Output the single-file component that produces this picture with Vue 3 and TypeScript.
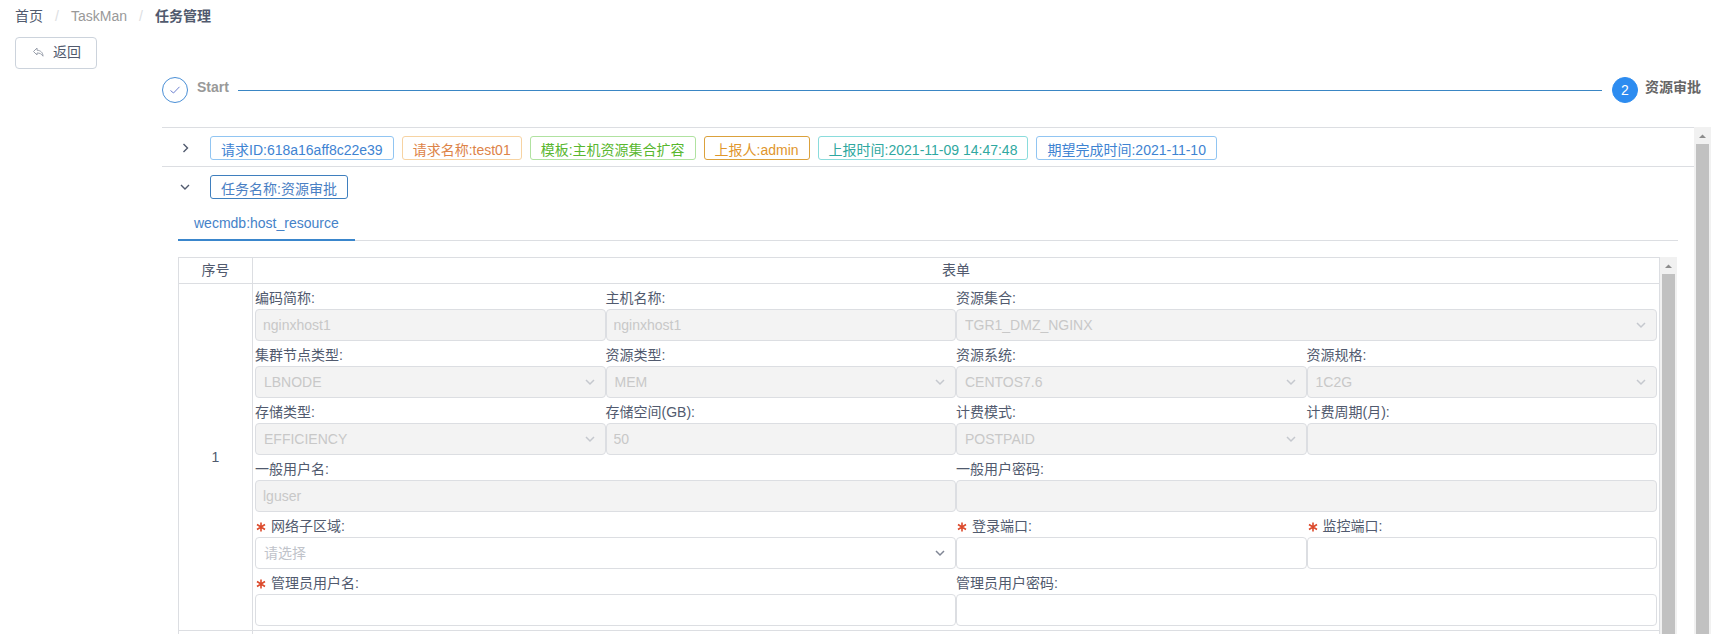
<script setup lang="ts">
import { reactive } from 'vue'

interface Field {
  id: string
  label: string
  value: string
  span: number
  kind: 'text' | 'select'
  disabled?: boolean
  required?: boolean
}

interface Tag {
  text: string
  tone: string
}

const tags: Tag[] = [
  { text: '请求ID:618a16aff8c22e39', tone: 'blue' },
  { text: '请求名称:test01', tone: 'orange' },
  { text: '模板:主机资源集合扩容', tone: 'green' },
  { text: '上报人:admin', tone: 'gold' },
  { text: '上报时间:2021-11-09 14:47:48', tone: 'cyan' },
  { text: '期望完成时间:2021-11-10', tone: 'blue' },
]

const fields = reactive<Field[]>([
  { id: 'code', label: '编码简称:', value: 'nginxhost1', span: 1, kind: 'text', disabled: true },
  { id: 'host', label: '主机名称:', value: 'nginxhost1', span: 1, kind: 'text', disabled: true },
  { id: 'set', label: '资源集合:', value: 'TGR1_DMZ_NGINX', span: 2, kind: 'select', disabled: true },
  { id: 'node', label: '集群节点类型:', value: 'LBNODE', span: 1, kind: 'select', disabled: true },
  { id: 'type', label: '资源类型:', value: 'MEM', span: 1, kind: 'select', disabled: true },
  { id: 'system', label: '资源系统:', value: 'CENTOS7.6', span: 1, kind: 'select', disabled: true },
  { id: 'spec', label: '资源规格:', value: '1C2G', span: 1, kind: 'select', disabled: true },
  { id: 'storage', label: '存储类型:', value: 'EFFICIENCY', span: 1, kind: 'select', disabled: true },
  { id: 'space', label: '存储空间(GB):', value: '50', span: 1, kind: 'text', disabled: true },
  { id: 'billing', label: '计费模式:', value: 'POSTPAID', span: 1, kind: 'select', disabled: true },
  { id: 'cycle', label: '计费周期(月):', value: '', span: 1, kind: 'text', disabled: true },
  { id: 'user', label: '一般用户名:', value: 'lguser', span: 2, kind: 'text', disabled: true },
  { id: 'password', label: '一般用户密码:', value: '', span: 2, kind: 'text', disabled: true },
  { id: 'subzone', label: '网络子区域:', value: '', span: 2, kind: 'select', required: true },
  { id: 'login', label: '登录端口:', value: '', span: 1, kind: 'text', required: true },
  { id: 'monitor', label: '监控端口:', value: '', span: 1, kind: 'text', required: true },
  { id: 'admin', label: '管理员用户名:', value: '', span: 2, kind: 'text', required: true },
  { id: 'adminpw', label: '管理员用户密码:', value: '', span: 2, kind: 'text' },
])
</script>

<template>
  <div class="page">
    <nav class="crumbs" aria-label="breadcrumb">
      <a href="#" class="crumb home">首页</a>
      <span class="slash">/</span>
      <a href="#" class="crumb">TaskMan</a>
      <span class="slash">/</span>
      <span class="crumb current">任务管理</span>
    </nav>

    <button type="button" class="back">
      <svg class="back-icon" viewBox="0 0 14 14" aria-hidden="true">
        <path d="M6 3 2.500 6.500 6 10V8C8.800 8 10.500 8.800 12 11.200 12 7.500 9.500 5.400 6 5.200Z" />
      </svg>
      <span>返回</span>
    </button>

    <main class="main">
      <ol class="steps">
        <li class="step done">
          <span class="dot">
            <svg viewBox="0 0 12 12" aria-hidden="true"><path d="M1.500 6.500 4.500 9 10.500 2.800" /></svg>
          </span>
          <span class="step-title">Start</span>
          <span class="step-line"></span>
        </li>
        <li class="step active">
          <span class="dot">2</span>
          <span class="step-title">资源审批</span>
        </li>
      </ol>

      <section class="panel">
        <div class="panel-body">
          <div class="head bordered">
            <button type="button" class="toggle" aria-label="展开">
              <svg viewBox="0 0 14 14" aria-hidden="true"><path d="M5.500 3 9.500 7 5.500 11" /></svg>
            </button>
            <span v-for="tag in tags" :key="tag.text" class="tag" :class="tag.tone">{{ tag.text }}</span>
          </div>

          <div class="head">
            <button type="button" class="toggle" aria-label="收起">
              <svg viewBox="0 0 14 14" aria-hidden="true"><path d="M3 5 7 9 11 5" /></svg>
            </button>
            <span class="tag primary">任务名称:资源审批</span>
          </div>

          <div class="content">
            <div class="tabs" role="tablist">
              <button type="button" role="tab" class="tab" aria-selected="true">wecmdb:host_resource</button>
            </div>

            <div class="scroller">
              <table class="grid">
                <thead>
                  <tr>
                    <th class="index">序号</th>
                    <th>表单</th>
                  </tr>
                </thead>
                <tbody>
                  <tr>
                    <td class="index">1</td>
                    <td class="form-cell">
                      <form class="form">
                        <div v-for="f in fields" :key="f.id" class="field" :class="{ wide: f.span === 2 }">
                          <label :for="f.id">
                            <svg v-if="f.required" class="star" viewBox="0 0 10 10" aria-hidden="true">
                              <path d="M5 .5V9.500M1 2.500 9 7.500M9 2.500 1 7.500" />
                            </svg>{{ f.label }}
                          </label>
                          <div v-if="f.kind === 'select'" class="select">
                            <select :id="f.id" v-model="f.value" :disabled="f.disabled" :class="{ empty: !f.value }">
                              <option v-if="f.value" :value="f.value">{{ f.value }}</option>
                              <option v-else value="">请选择</option>
                            </select>
                            <svg class="arrow" :class="{ off: f.disabled }" viewBox="0 0 14 14" aria-hidden="true">
                              <path d="M3 5 7 9 11 5" />
                            </svg>
                          </div>
                          <input v-else :id="f.id" v-model="f.value" type="text" :disabled="f.disabled" />
                        </div>
                      </form>
                    </td>
                  </tr>
                  <tr class="next">
                    <td class="index"></td>
                    <td></td>
                  </tr>
                </tbody>
              </table>
              <div class="bar" aria-hidden="true">
                <svg viewBox="0 0 17 17"><path d="M5 11 8.500 7.500 12 11Z" /></svg>
                <div class="thumb"></div>
              </div>
            </div>
          </div>
        </div>
        <div class="bar" aria-hidden="true">
          <svg viewBox="0 0 17 17"><path d="M5 11 8.500 7.500 12 11Z" /></svg>
          <div class="thumb"></div>
        </div>
      </section>
    </main>
  </div>
</template>

<style>
body {
  margin: 0;
  background: #fff;
}
</style>

<style scoped>
.page,
.page * {
  box-sizing: border-box;
}

.page {
  display: flex;
  flex-direction: column;
  align-items: flex-start;
  height: 100vh;
  padding: 5px 15px 0;
  overflow: hidden;
  color: #515a6e;
  font: 14px/22px "Liberation Sans", "Noto Sans CJK SC", sans-serif;
}

button,
input,
select {
  font: inherit;
  color: inherit;
  margin: 0;
}

svg {
  fill: none;
  stroke: currentColor;
}

.crumbs {
  display: flex;
  flex: none;
  margin-bottom: 10px;
}

.crumb {
  color: #999;
  text-decoration: none;
}

.crumb.home {
  color: #515a6e;
}

.crumb.current {
  color: #515a6e;
  font-weight: 700;
}

.slash {
  width: 28px;
  text-align: center;
  color: #dcdee2;
}

.back {
  display: flex;
  flex: none;
  align-items: center;
  gap: 8px;
  height: 32px;
  padding: 0 15px 2px;
  border: 1px solid #ccd3dc;
  border-radius: 4px;
  background: #fff;
}

.back-icon {
  width: 14px;
  height: 14px;
  color: #9aa0ac;
}

.main {
  display: flex;
  flex: 1;
  flex-direction: column;
  align-self: stretch;
  min-height: 0;
  margin-left: 147px;
}

.steps {
  display: flex;
  flex: none;
  margin: 8px 9px 24px 0;
  padding: 0;
  list-style: none;
}

.step {
  display: flex;
}

.step.done {
  flex: 1;
}

.dot {
  display: flex;
  flex: none;
  align-items: center;
  justify-content: center;
  width: 26px;
  height: 26px;
  border: 1px solid #4a8fd6;
  border-radius: 50%;
}

.dot svg {
  width: 12px;
  height: 12px;
  color: #6c80d0;
}

.step-title {
  padding: 0 9px;
  line-height: 20px;
  font-weight: 700;
  color: #999;
}

.step-line {
  flex: 1;
  height: 1px;
  margin: 13px 10px 0 0;
  background: #3a86c4;
}

.active .dot {
  border-color: #2d8cf0;
  background: #2d8cf0;
  color: #fff;
}

.active .step-title {
  padding: 0 1px 0 7px;
  color: #666;
}

.panel {
  display: flex;
  flex: 1;
  min-height: 0;
}

.panel-body {
  flex: 1;
  min-width: 0;
  border-top: 1px solid #dcdee2;
}

.head {
  display: flex;
  align-items: center;
  gap: 8px;
  height: 40px;
  padding-left: 16px;
}

.head.bordered {
  height: 39px;
  padding-top: 2px;
  border-bottom: 1px solid #dcdee2;
}

.toggle {
  display: flex;
  width: 24px;
  padding: 0;
  border: 0;
  background: none;
}

.toggle svg {
  width: 14px;
  height: 14px;
  stroke-width: 1.4;
}

.tag {
  height: 24px;
  padding: 2px 10px 0;
  border: 1px solid;
  border-radius: 3px;
  line-height: 22px;
  white-space: nowrap;
}

.tag.blue {
  border-color: #91c5f2;
  color: #3e83d2;
}

.tag.orange {
  border-color: #f7d3a2;
  color: #dd8348;
}

.tag.green {
  border-color: #b0e2a0;
  color: #58b72f;
}

.tag.gold {
  border-color: #dba13c;
  color: #df962c;
}

.tag.cyan {
  border-color: #8adcdc;
  color: #2fa8a0;
}

.tag.primary {
  border-color: #3f7fbe;
  color: #4a80c4;
}

.content {
  padding: 0 16px;
}

.tabs {
  display: flex;
  height: 34px;
  margin-bottom: 16px;
  border-bottom: 1px solid #dcdee2;
}

.tab {
  height: 34px;
  padding: 0 16px;
  border: 0;
  border-bottom: 2px solid #3a86cc;
  background: none;
  color: #4582c8;
}

.scroller {
  display: flex;
  padding-right: 1px;
}

.grid {
  flex: 1;
  border-collapse: collapse;
  table-layout: fixed;
  width: 100%;
}

.grid th,
.grid td {
  padding: 0;
  border: 1px solid #dcdee2;
  font-weight: 400;
  text-align: center;
}

.grid th {
  height: 26px;
  padding-bottom: 2px;
}

.grid .index {
  width: 74px;
}

.grid .form-cell {
  padding: 0 2px 4px;
  text-align: left;
}

.next td {
  height: 347px;
}

.form {
  display: grid;
  grid-template-columns: repeat(4, minmax(0, 1fr));
}

.field.wide {
  grid-column: span 2;
}

.field label {
  display: flex;
  align-items: center;
  height: 25px;
  padding-top: 2px;
}

.star {
  width: 10px;
  height: 10px;
  margin: 2px 5px 0 1px;
  color: #dc4a2c;
  stroke-width: 1.6;
}

.field input,
.field select {
  display: block;
  width: 100%;
  height: 32px;
  padding: 0 7px;
  border: 1px solid #dcdee2;
  border-radius: 4px;
  background: #fff;
  outline: none;
}

.field select {
  appearance: none;
  padding: 0 24px 0 8px;
}

.field input:disabled,
.field select:disabled {
  background: #f3f3f3;
  color: #c8c8c8;
  opacity: 1;
}

.field select.empty {
  color: #c0c3ca;
}

.select {
  position: relative;
}

.arrow {
  position: absolute;
  top: 9px;
  right: 9px;
  width: 14px;
  height: 14px;
  color: #808695;
  stroke-width: 1.5;
  pointer-events: none;
}

.arrow.off {
  color: #c5c8ce;
}

.bar {
  display: flex;
  flex: none;
  flex-direction: column;
  width: 17px;
  background: #f1f1f1;
}

.bar svg {
  width: 17px;
  height: 17px;
  fill: #8c8c8c;
  stroke: none;
}

.thumb {
  flex: 1;
  margin: 0 2px;
  background: #c1c1c1;
}
</style>
